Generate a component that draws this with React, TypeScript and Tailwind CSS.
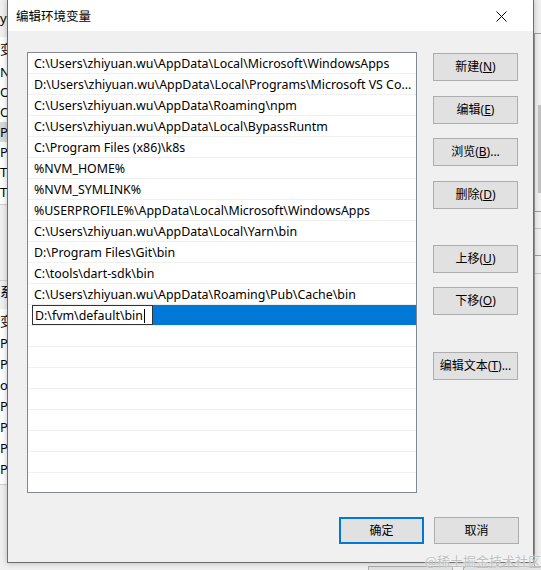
import React from "react";

const paths = [
  "C:\\Users\\zhiyuan.wu\\AppData\\Local\\Microsoft\\WindowsApps",
  "D:\\Users\\zhiyuan.wu\\AppData\\Local\\Programs\\Microsoft VS Code\\bin",
  "C:\\Users\\zhiyuan.wu\\AppData\\Roaming\\npm",
  "C:\\Users\\zhiyuan.wu\\AppData\\Local\\BypassRuntm",
  "C:\\Program Files (x86)\\k8s",
  "%NVM_HOME%",
  "%NVM_SYMLINK%",
  "%USERPROFILE%\\AppData\\Local\\Microsoft\\WindowsApps",
  "C:\\Users\\zhiyuan.wu\\AppData\\Local\\Yarn\\bin",
  "D:\\Program Files\\Git\\bin",
  "C:\\tools\\dart-sdk\\bin",
  "C:\\Users\\zhiyuan.wu\\AppData\\Roaming\\Pub\\Cache\\bin",
];

const userVars = ["NVM", "OneDrive", "OneDrive", "Path", "PUB", "TEMP", "TMP"];
const sysVars = ["Path", "PATH", "ol", "PROC", "PROC", "PROC", "PROC"];

function Btn({ label, k, suffix = "" }: { label: string; k: string; suffix?: string }) {
  return (
    <button
      type="button"
      className="w-[85px] h-[28px] bg-[#e1e1e1] border border-[#adadad] text-[12px] text-black flex items-center justify-center"
    >
      {label}(<span className="underline">{k}</span>){suffix}
    </button>
  );
}

function BackgroundWindow() {
  return (
    <div className="absolute inset-0 bg-[#f0f0f0]">
      {/* left edge of the window behind */}
      <div className="absolute left-0 top-0 w-[8px] h-full overflow-hidden text-[13px]">
        <div className="h-[37px] pt-[9px] leading-[18px]">y</div>
        <div className="w-[200px] h-[168px] bg-white border-b border-[#d0d0d0]">
          <div className="h-[25px] leading-[25px] whitespace-nowrap">变量</div>
          {userVars.map((v, i) => (
            <div
              key={i}
              className={`h-[20px] leading-[20px] whitespace-nowrap ${i === 3 ? "bg-[#d9d9d9]" : ""}`}
            >
              {v}
            </div>
          ))}
        </div>
        <div className="h-[76px] border-b border-[#d0d0d0]" />
        <div className="h-[20px] leading-[20px] whitespace-nowrap">系统</div>
        <div className="mt-[8px] w-[200px] h-[176px] bg-white border-b border-[#d0d0d0]">
          <div className="h-[24px] leading-[24px] whitespace-nowrap">变量</div>
          {sysVars.map((v, i) => (
            <div key={i} className="h-[21px] leading-[21px] whitespace-nowrap">
              {v}
            </div>
          ))}
        </div>
      </div>
      {/* right edge of the window behind */}
      <div className="absolute left-[534px] top-[33px] w-[7px] h-[537px] border-l border-t border-[#a0a0a0]">
        <div className="ml-[3px] mt-[71px] w-[4px] h-[88px] bg-[#c2c2c2]" />
        <div className="mt-[18px] h-[17px] border-t border-[#a0a0a0]" />
        <div className="h-[27px] border-t border-[#c8c8c8]" />
        <div className="h-[18px] border-t border-[#a0a0a0]" />
        <div className="border-t border-[#c8c8c8]" />
      </div>
      {/* buttons of the window behind, peeking below the dialog */}
      <div className="absolute left-[368px] top-[566px] w-[85px] h-[10px] border border-[#adadad] bg-[#e1e1e1]" />
      <div className="absolute left-[463px] top-[566px] w-[85px] h-[10px] border border-[#adadad] bg-[#e1e1e1]" />
    </div>
  );
}

export default function App() {
  return (
    <div className="relative w-[541px] h-[570px] overflow-hidden text-black font-['Noto_Sans','Noto_Sans_CJK_SC',sans-serif] text-[12px]">
      <BackgroundWindow />

      <div className="absolute left-[7px] top-[-1px] w-[527px] h-[564px] border border-[#6e6e6e] bg-[#f0f0f0] flex flex-col shadow-[0_0_6px_rgba(0,0,0,0.25)]">
        {/* title bar */}
        <div className="h-[31px] bg-white flex items-center justify-between pl-[8px] pr-[26px] pt-[2px]">
          <span className="text-[12.5px] font-['Noto_Sans_CJK_SC',sans-serif]">编辑环境变量</span>
          <svg width="11" height="11" viewBox="0 0 11 11" className="text-black">
            <path d="M0.5 0.5 L10.5 10.5 M10.5 0.5 L0.5 10.5" stroke="currentColor" strokeWidth="1" />
          </svg>
        </div>

        {/* body */}
        <div className="flex-1 flex flex-col pl-[19px] pr-[14px] pt-[21px]">
          <div className="flex">
            <div className="w-[390px] h-[441px] border border-[#828790] bg-white overflow-hidden text-[12.4px]">
              {paths.map((p, i) => (
                <div
                  key={i}
                  className="h-[21px] border-b border-[#f0f0f0] pl-[6px] pr-[3px] pt-[3px] flex items-center whitespace-nowrap overflow-hidden"
                >
                  <span className="block overflow-hidden text-ellipsis">{p}</span>
                </div>
              ))}
              {/* row being edited */}
              <div className="h-[21px] flex border-b border-[#f0f0f0]">
                <div className="pl-[4px] bg-white h-full flex items-center">
                  <div className="w-[121px] h-[20px] border border-[#333333] bg-white pl-[2px] pt-[2px] flex items-center whitespace-nowrap">
                    D:\fvm\default\bin
                    <span className="inline-block w-[1px] h-[14px] bg-black ml-[1px]" />
                  </div>
                </div>
                <div className="flex-1 h-[20px] bg-[#0078d7]" />
              </div>
              {Array.from({ length: 8 }).map((_, i) => (
                <div key={i} className="h-[21px] border-b border-[#f0f0f0]" />
              ))}
            </div>

            <div className="ml-[16px] pt-[1px] flex flex-col">
              <Btn label="新建" k="N" />
              <div className="mt-[15px]">
                <Btn label="编辑" k="E" />
              </div>
              <div className="mt-[14px]">
                <Btn label="浏览" k="B" suffix="..." />
              </div>
              <div className="mt-[15px]">
                <Btn label="删除" k="D" />
              </div>
              <div className="mt-[36px]">
                <Btn label="上移" k="U" />
              </div>
              <div className="mt-[14px]">
                <Btn label="下移" k="O" />
              </div>
              <div className="mt-[37px]">
                <Btn label="编辑文本" k="T" suffix="..." />
              </div>
            </div>
          </div>

          <div className="mt-[24px] flex justify-end gap-[10px]">
            <button
              type="button"
              className="w-[85px] h-[27px] bg-[#e1e1e1] border-2 border-[#0078d7] text-[12px] flex items-center justify-center"
            >
              确定
            </button>
            <button
              type="button"
              className="w-[85px] h-[27px] bg-[#e1e1e1] border border-[#adadad] text-[12px] flex items-center justify-center"
            >
              取消
            </button>
          </div>
        </div>
      </div>

      {/* site watermark */}
      <div className="absolute right-[0px] bottom-[1px] text-[13px] leading-[16px] text-[#c0c0c0] font-['Noto_Sans_CJK_SC',sans-serif] whitespace-nowrap [text-shadow:0_0_2px_#ffffff]">
        @稀土掘金技术社区
      </div>
    </div>
  );
}
